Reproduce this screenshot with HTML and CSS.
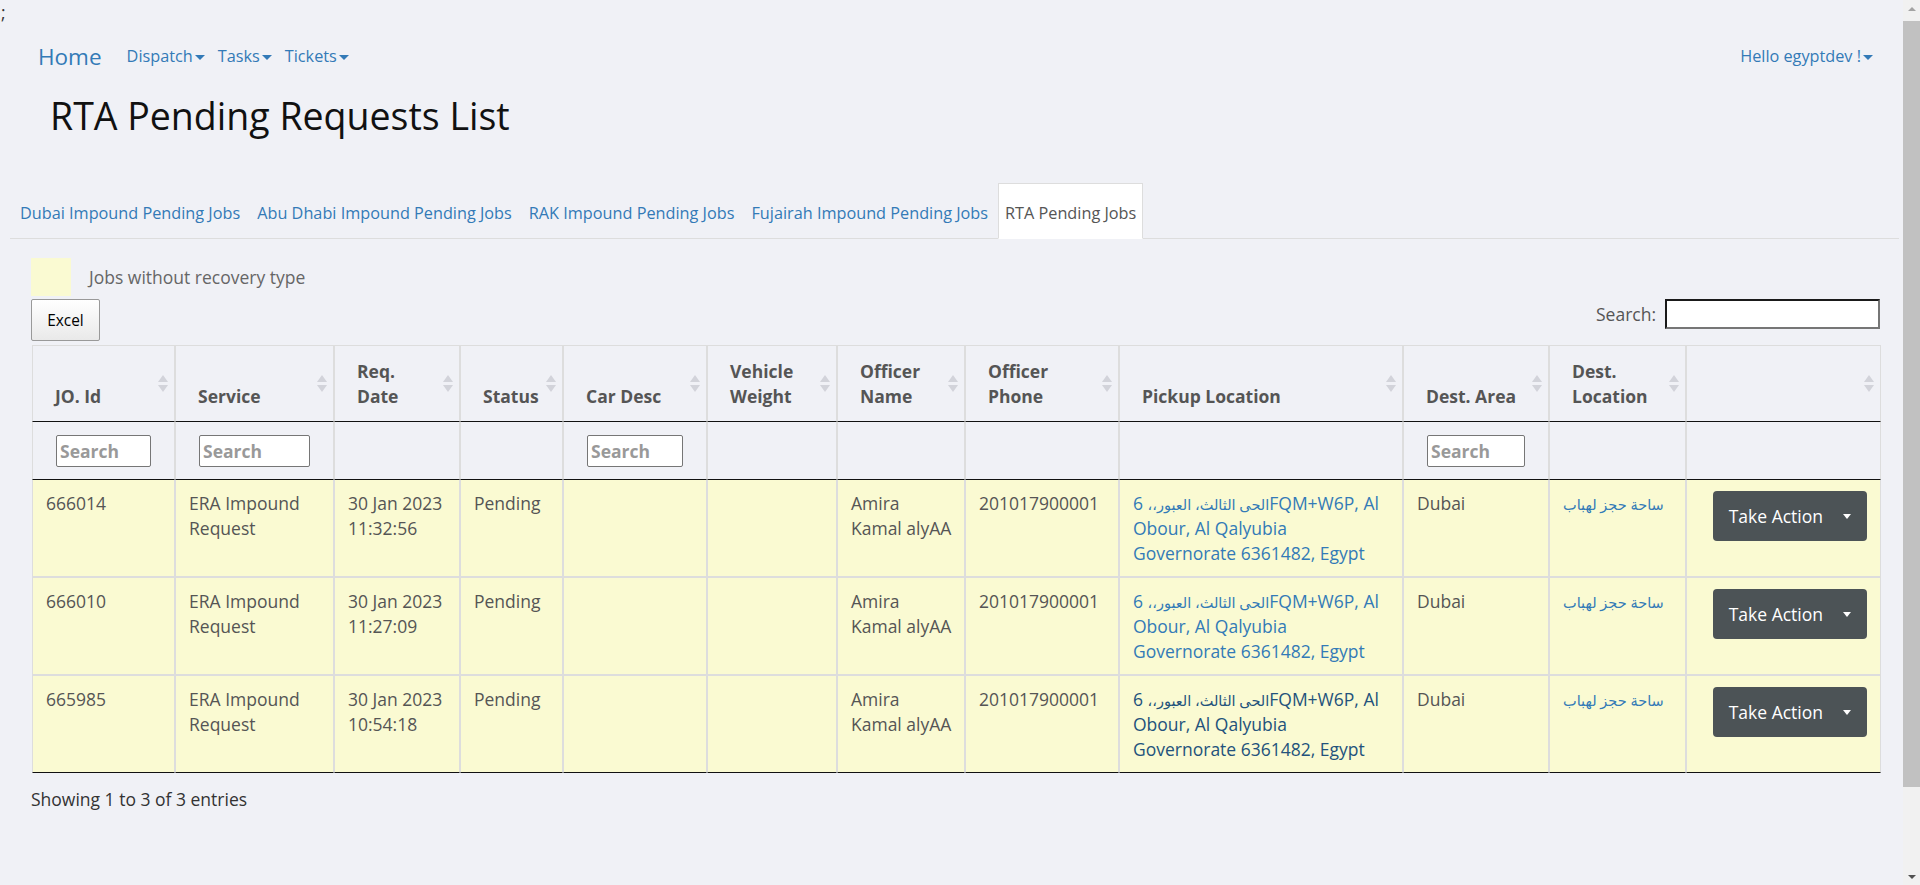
FILE: index.html
```html
<!DOCTYPE html>
<html lang="en">
<head>
<meta charset="utf-8">
<title>RTA Pending Requests List</title>
<link rel="stylesheet" href="styles.css">
</head>
<body>
<div class="stray">;</div>
<nav class="navbar">
  <a class="brand" href="#">Home</a>
  <ul class="nav-links">
    <li><a href="#">Dispatch<span class="caret"></span></a></li>
    <li><a href="#">Tasks<span class="caret"></span></a></li>
    <li><a href="#">Tickets<span class="caret"></span></a></li>
  </ul>
  <div class="user"><a href="#">Hello egyptdev !<span class="caret"></span></a></div>
</nav>

<h2 class="page-title">RTA Pending Requests List</h2>

<ul class="tabs">
  <li><a href="#">Dubai Impound Pending Jobs</a></li>
  <li><a href="#">Abu Dhabi Impound Pending Jobs</a></li>
  <li><a href="#">RAK Impound Pending Jobs</a></li>
  <li><a href="#">Fujairah Impound Pending Jobs</a></li>
  <li class="active"><a href="#">RTA Pending Jobs</a></li>
</ul>

<div class="tab-content">
  <div class="legend"><span class="swatch"></span><span>Jobs without recovery type</span></div>
  <div class="toolbar">
    <button class="excel" type="button">Excel</button>
    <label class="search">Search:<input type="search"></label>
  </div>

  <table class="jobs">
    <colgroup>
      <col class="c-id"><col class="c-service"><col class="c-date"><col class="c-status">
      <col class="c-car"><col class="c-weight"><col class="c-officer"><col class="c-phone">
      <col class="c-pickup"><col class="c-area"><col class="c-dest"><col class="c-action">
    </colgroup>
    <thead>
      <tr class="heads">
        <th class="sort">JO. Id</th>
        <th class="sort">Service</th>
        <th class="sort">Req.<br>Date</th>
        <th class="sort">Status</th>
        <th class="sort">Car Desc</th>
        <th class="sort">Vehicle<br>Weight</th>
        <th class="sort">Officer<br>Name</th>
        <th class="sort">Officer<br>Phone</th>
        <th class="sort">Pickup Location</th>
        <th class="sort">Dest. Area</th>
        <th class="sort">Dest.<br>Location</th>
        <th class="sort"></th>
      </tr>
      <tr class="filters">
        <th><input class="filter" placeholder="Search"></th>
        <th><input class="filter" placeholder="Search"></th>
        <th></th>
        <th></th>
        <th><input class="filter" placeholder="Search"></th>
        <th></th>
        <th></th>
        <th></th>
        <th></th>
        <th><input class="filter" placeholder="Search"></th>
        <th></th>
        <th></th>
      </tr>
    </thead>
    <tbody>
      <tr>
        <td>666014</td>
        <td>ERA Impound<br>Request</td>
        <td>30 Jan 2023<br>11:32:56</td>
        <td>Pending</td>
        <td></td>
        <td></td>
        <td>Amira<br>Kamal alyAA</td>
        <td>201017900001</td>
        <td><a href="#"><span class="ar">الحى الثالث، العبور،،</span><span> 6</span>FQM+W6P, Al<br>Obour, Al Qalyubia<br>Governorate 6361482, Egypt</a></td>
        <td>Dubai</td>
        <td><a class="ar" href="#">ساحة حجز لهباب</a></td>
        <td class="act"><button class="action" type="button">Take Action<span class="caret-w"></span></button></td>
      </tr>
      <tr>
        <td>666010</td>
        <td>ERA Impound<br>Request</td>
        <td>30 Jan 2023<br>11:27:09</td>
        <td>Pending</td>
        <td></td>
        <td></td>
        <td>Amira<br>Kamal alyAA</td>
        <td>201017900001</td>
        <td><a href="#"><span class="ar">الحى الثالث، العبور،،</span><span> 6</span>FQM+W6P, Al<br>Obour, Al Qalyubia<br>Governorate 6361482, Egypt</a></td>
        <td>Dubai</td>
        <td><a class="ar" href="#">ساحة حجز لهباب</a></td>
        <td class="act"><button class="action" type="button">Take Action<span class="caret-w"></span></button></td>
      </tr>
      <tr>
        <td>665985</td>
        <td>ERA Impound<br>Request</td>
        <td>30 Jan 2023<br>10:54:18</td>
        <td>Pending</td>
        <td></td>
        <td></td>
        <td>Amira<br>Kamal alyAA</td>
        <td>201017900001</td>
        <td><a class="hover" href="#"><span class="ar">الحى الثالث، العبور،،</span><span> 6</span>FQM+W6P, Al<br>Obour, Al Qalyubia<br>Governorate 6361482, Egypt</a></td>
        <td>Dubai</td>
        <td><a class="ar" href="#">ساحة حجز لهباب</a></td>
        <td class="act"><button class="action" type="button">Take Action<span class="caret-w"></span></button></td>
      </tr>
    </tbody>
  </table>

  <div class="info">Showing 1 to 3 of 3 entries</div>
</div>

<div class="scrollbar" aria-hidden="true">
  <span class="sb-up"></span>
  <span class="sb-thumb"></span>
  <span class="sb-down"></span>
</div>
</body>
</html>
```

FILE: styles.css
```css
html {
  background: #f0f1f6;
}
body {
  margin: 0;
  min-height: 983px;
  font-family: "Open Sans", "DejaVu Sans", sans-serif;
  font-size: 17.5px;
  line-height: 25px;
  color: #555;
  background: #f0f1f6;
}
a {
  color: #337ab7;
  text-decoration: none;
}

.stray {
  height: 25px;
  padding-left: 1px;
  color: #333;
}

/* navbar */
.navbar {
  display: flex;
  align-items: center;
  height: 62px;
  padding: 0 47px 0 38px;
  font-size: 16.25px;
}
.brand {
  font-size: 22.5px;
  margin-right: 25px;
}
.nav-links {
  display: flex;
  gap: 13px;
  list-style: none;
  margin: 0;
  padding: 0;
}
.caret {
  display: inline-block;
  width: 0;
  height: 0;
  margin-left: 2px;
  vertical-align: middle;
  border-top: 5px solid;
  border-left: 5px solid transparent;
  border-right: 5px solid transparent;
}
.user {
  margin-left: auto;
}

.page-title {
  margin: 8px 0 0 50px;
  font-size: 37.5px;
  line-height: 41px;
  font-weight: 400;
  color: #111;
}

/* tabs */
.tabs {
  display: flex;
  list-style: none;
  margin: 47px 21px 0 10px;
  padding: 0 0 0 3px;
  border-bottom: 1px solid #ddd;
  font-size: 16.25px;
}
.tabs li {
  margin: 0 3px -1px 0;
}
.tabs a {
  display: block;
  padding: 17px 6px 12px;
  border: 1px solid transparent;
}
.tabs .active a {
  background: #fff;
  color: #555;
  border-color: #ddd;
  border-bottom-color: transparent;
}

/* content */
.tab-content {
  width: 1850px;
  padding: 19px 0 0 31px;
}
.legend {
  display: flex;
  align-items: center;
  gap: 18px;
  color: #666;
}
.swatch {
  width: 40px;
  height: 38px;
  background: #fafad2;
}
.toolbar {
  display: flex;
  justify-content: space-between;
  align-items: flex-start;
  margin-top: 3px;
}
.excel {
  width: 69px;
  height: 42px;
  padding: 0;
  border: 1px solid #999;
  border-radius: 2px;
  background: linear-gradient(to bottom, #fff 0%, #e9e9e9 100%);
  color: #000;
  font-family: "Open Sans", sans-serif;
  font-size: 15.4px;
}
.search {
  display: flex;
  align-items: center;
  gap: 9px;
  margin-right: 1px;
}
.search input {
  width: 215px;
  height: 30px;
  box-sizing: border-box;
  margin: 0;
  border-style: solid;
  border-width: 2px;
  border-color: #1a1a1a #767676 #767676 #1a1a1a;
  background: #fff;
}

/* table */
.jobs {
  width: 1849px;
  margin: 4px 0 0 1px;
  table-layout: fixed;
  border-collapse: separate;
  border-spacing: 0;
}
.c-id { width: 143px; }
.c-service { width: 159px; }
.c-date { width: 126px; }
.c-status { width: 103px; }
.c-car { width: 144px; }
.c-weight { width: 130px; }
.c-officer { width: 128px; }
.c-phone { width: 154px; }
.c-pickup { width: 284px; }
.c-area { width: 146px; }
.c-dest { width: 137px; }
.c-action { width: 195px; }

.jobs th,
.jobs td {
  text-align: left;
  vertical-align: top;
  border-left: 1px solid #ddd;
  border-right: 1px solid #ddd;
}
.heads th {
  position: relative;
  vertical-align: bottom;
  padding: 13px 22px 12px 22px;
  border-top: 1px solid #ddd;
  border-bottom: 1px solid #111;
  font-weight: 700;
}
.sort::before,
.sort::after {
  content: "";
  position: absolute;
  right: 6px;
  width: 0;
  height: 0;
  border-left: 5px solid transparent;
  border-right: 5px solid transparent;
}
.sort::before {
  top: calc(50% - 9px);
  border-bottom: 7px solid #d2d3da;
}
.sort::after {
  top: calc(50% + 1px);
  border-top: 7px solid #d2d3da;
}
.filters th {
  padding: 13px 22px 12px 23px;
  border-bottom: 1px solid #111;
}
.filter {
  display: block;
  width: calc(100% - 1px);
  height: 32px;
  box-sizing: border-box;
  margin: 0;
  padding: 0 3px;
  border: 1px solid #767676;
  border-radius: 2px;
  background: #fff;
  font-family: "Open Sans", sans-serif;
  font-size: 17.5px;
  font-weight: 700;
}
.filter::placeholder {
  color: #999;
}
.jobs td {
  padding: 11px 13px 10px;
  white-space: nowrap;
  background: #fafad2;
  border-top: 1px solid #ddd;
  border-bottom: 1px solid #ddd;
}
.jobs tbody tr:first-child td {
  border-top: 0;
}
.jobs tbody tr:last-child td {
  border-bottom-color: #111;
}
.jobs a.hover {
  color: #23527c;
}
.ar {
  font-size: 14.5px;
  line-height: 1;
}
.jobs td.act {
  text-align: right;
}
.action {
  display: inline-flex;
  align-items: center;
  gap: 20px;
  height: 50px;
  padding: 0 16px;
  border: 0;
  border-radius: 4px;
  background: #4c5356;
  color: #fff;
  font-family: "Open Sans", sans-serif;
  font-size: 17.5px;
}
.caret-w {
  width: 0;
  height: 0;
  border-top: 5px solid #fff;
  border-left: 4.5px solid transparent;
  border-right: 4.5px solid transparent;
}
.info {
  margin-top: 14px;
  color: #333;
}

/* window scrollbar drawn over the page edge */
.scrollbar {
  position: fixed;
  top: 0;
  right: 0;
  bottom: 0;
  width: 17px;
  display: flex;
  flex-direction: column;
  background: #f1f1f1;
}
.sb-up,
.sb-down {
  height: 17px;
  display: flex;
  align-items: center;
  justify-content: center;
}
.sb-up::before {
  content: "";
  border-bottom: 4px solid #a3a3a3;
  border-left: 4px solid transparent;
  border-right: 4px solid transparent;
}
.sb-down::before {
  content: "";
  border-top: 4px solid #505050;
  border-left: 4px solid transparent;
  border-right: 4px solid transparent;
}
.sb-thumb {
  height: 766px;
  margin-top: 4px;
  background: #c1c1c1;
}
.sb-down {
  margin-top: auto;
}
```
